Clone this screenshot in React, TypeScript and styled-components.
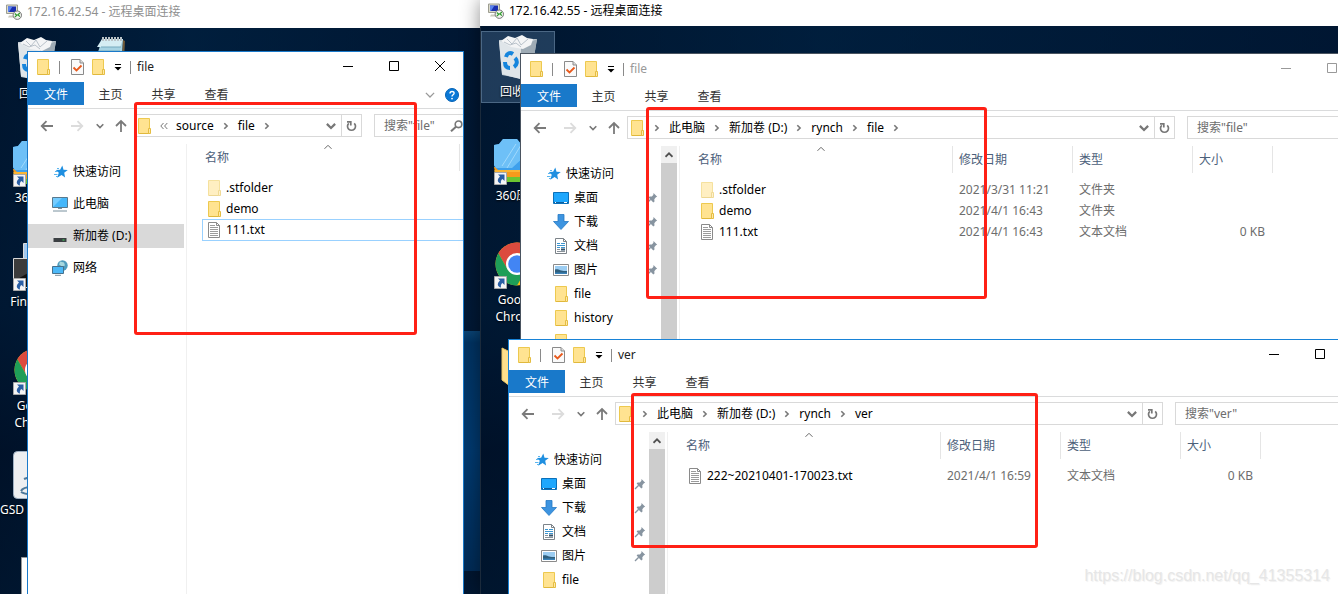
import React from "react";
import styled, { createGlobalStyle } from "styled-components";

const GlobalStyle = createGlobalStyle`
  * { box-sizing: border-box; }
  body {
    margin: 0;
    overflow: hidden;
    font-family: "Noto Sans", "Noto Sans CJK SC", sans-serif;
    font-size: 12px;
    line-height: 16px;
    color: #000;
  }
  button, input { font: inherit; color: inherit; margin: 0; }
  button { border: 0; padding: 0; background: none; }
  svg { display: block; flex: none; }
`;

/* ---------- remote sessions ---------- */

const Screen = styled.main`
  display: flex;
  height: 100vh;
  overflow: hidden;
`;

const Session = styled.section<{ $side: "left" | "right" }>`
  position: relative;
  display: flex;
  flex-direction: column;
  min-width: 0;
  flex: ${(p) => (p.$side === "left" ? "0 0 480px" : "1 1 0")};
  box-shadow: ${(p) => (p.$side === "right" ? "0 0 18px rgba(0, 0, 0, 0.45)" : "none")};
`;

const SessionTitle = styled.header<{ $active: boolean }>`
  display: flex;
  align-items: center;
  gap: 5px;
  flex: none;
  height: ${(p) => (p.$active ? 26 : 28)}px;
  padding: ${(p) => (p.$active ? "0 8px 4px" : "0 6px 4px")};
  background: #fff;
  color: ${(p) => (p.$active ? "#000" : "#8f8f8f")};
`;

const Desktop = styled.div<{ $glow: boolean }>`
  position: relative;
  flex: 1;
  overflow: hidden;
  background: ${(p) =>
    p.$glow
      ? "linear-gradient(#0a4475, #003363 12px, #003a70 50%, #002c58) right 303px / 17px 240px no-repeat,"
      : ""}
    linear-gradient(90deg, rgba(0, 18, 42, 0.6), rgba(0, 34, 68, 0.5) 40%, rgba(0, 20, 48, 0.6)),
    linear-gradient(#001a35, #00203f 50%, #001026 75%, #001a33);
  border-left: ${(p) => (p.$glow ? "0" : "1px solid #1b2a3b")};
`;

const IconColumns = styled.div`
  display: flex;
  gap: 3px;
  padding-top: 5px;
`;

const IconColumn = styled.div`
  display: flex;
  flex-direction: column;
  width: 74px;
`;

const DesktopItem = styled.button<{ $selected?: boolean; $start?: boolean }>`
  display: flex;
  flex-direction: column;
  align-items: ${(p) => (p.$start ? "flex-start" : "center")};
  gap: 2px;
  height: 72px;
  margin-bottom: 32px;
  padding-top: ${(p) => (p.$selected ? 1 : 2)}px;
  color: #fff;
  line-height: 17px;
  text-shadow: 0 1px 2px #000;
  border: ${(p) => (p.$selected ? "1px solid #4b6784" : "0")};
  background: ${(p) => (p.$selected ? "rgba(90, 130, 170, 0.35)" : "none")};

  svg { align-self: center; }
`;

/* ---------- explorer window ---------- */

const Frame = styled.article<{ $left: number; $top: number; $right: number; $border: string }>`
  position: absolute;
  left: ${(p) => p.$left}px;
  top: ${(p) => p.$top}px;
  right: ${(p) => p.$right}px;
  bottom: -40px;
  display: flex;
  flex-direction: column;
  overflow: hidden;
  background: #fff;
  border: 1px solid ${(p) => p.$border};
`;

const TitleBar = styled.header`
  display: flex;
  align-items: center;
  flex: none;
  height: 30px;
  padding-left: 9px;
`;

const Divider = styled.span<{ $wide?: boolean }>`
  width: 1px;
  height: 13px;
  margin-right: ${(p) => (p.$wide ? 3 : 0)}px;
  background: #8a8a8a;
`;

const QuickTools = styled.div`
  display: flex;
  align-items: center;
  gap: 8px;
  margin-right: 6px;
`;

const WindowName = styled.h2<{ $dim: boolean }>`
  flex: 1;
  margin: 0;
  font-size: 12px;
  font-weight: 400;
  color: ${(p) => (p.$dim ? "#999" : "#222")};
`;

const CaptionButton = styled.button<{ $dim: boolean }>`
  display: grid;
  place-items: center;
  width: 46px;
  height: 28px;
  margin-bottom: 2px;
  color: ${(p) => (p.$dim ? "#999" : "#000")};
`;

const TabRow = styled.div`
  display: flex;
  flex: none;
  height: 27px;
  border-bottom: 1px solid #dadbdc;
`;

const Tab = styled.button<{ $file?: boolean }>`
  width: ${(p) => (p.$file ? 56 : 53)}px;
  height: 23px;
  padding-top: 3px;
  color: ${(p) => (p.$file ? "#fff" : "#333")};
  background: ${(p) => (p.$file ? "#1979ca" : "none")};
`;

const TabTools = styled.div`
  display: flex;
  align-items: center;
  gap: 10px;
  margin-left: auto;
  padding-right: 4px;
`;

const NavRow = styled.div`
  display: flex;
  flex: none;
  height: 23px;
  margin: 5px 0 7px;
  padding-left: 4px;
`;

const NavButton = styled.button<{ $width: number }>`
  display: grid;
  place-items: center;
  flex: none;
  width: ${(p) => p.$width}px;
`;

const Address = styled.div`
  display: flex;
  align-items: center;
  flex: 1;
  min-width: 0;
  padding-left: 3px;
  border: 1px solid #d9d9d9;
`;

const Crumbs = styled.nav`
  display: flex;
  align-items: center;
  flex: 1;
`;

const Slot = styled.span`
  display: grid;
  place-items: center;
  width: 24px;
`;

const AddressButton = styled.button<{ $line?: boolean }>`
  display: grid;
  place-items: center;
  width: 20px;
  height: 21px;
  border-left: ${(p) => (p.$line ? "1px solid #d9d9d9" : "0")};
`;

const SearchBox = styled.label<{ $width: number; $clipped: boolean }>`
  display: flex;
  align-items: center;
  flex: none;
  width: ${(p) => p.$width}px;
  margin-left: 12px;
  padding-left: 9px;
  border: 1px solid #d9d9d9;
  border-right-width: ${(p) => (p.$clipped ? 0 : 1)}px;

  input {
    flex: 1;
    min-width: 0;
    width: 0;
    padding: 0;
    border: 0;
    outline: 0;
    background: none;
  }
  input::placeholder { color: #6d6d6d; opacity: 1; }
`;

const Body = styled.div`
  display: flex;
  flex: 1;
  min-height: 0;
`;

const Side = styled.aside`
  display: flex;
  flex: none;
  width: 159px;
  border-right: 1px solid #f0f0f0;
`;

const Places = styled.div<{ $roomy: boolean }>`
  display: flex;
  flex-direction: column;
  flex: 1;
  gap: ${(p) => (p.$roomy ? 8 : 0)}px;
  padding-top: 16px;
  padding-right: ${(p) => (p.$roomy ? 2 : 0)}px;
`;

const Place = styled.button<{ $nested?: boolean; $current?: boolean }>`
  display: flex;
  align-items: center;
  gap: 5px;
  flex: none;
  height: 24px;
  padding: 0 3px 0 ${(p) => (p.$nested ? 32 : 24)}px;
  background: ${(p) => (p.$current ? "#d9d9d9" : "none")};
  white-space: nowrap;

  span { flex: 1; text-align: left; }
`;

const ScrollTrack = styled.div`
  display: flex;
  flex-direction: column;
  width: 16px;
  margin-right: 2px;
  background: #cdcdcd;
`;

const ScrollArrow = styled.button`
  display: grid;
  place-items: center;
  height: 17px;
  background: #f0f0f0;
`;

const Listing = styled.div`
  flex: 1;
  min-width: 0;
  padding-left: 15px;
`;

const Table = styled.table`
  width: 100%;
  table-layout: fixed;
  border-collapse: separate;
  border-spacing: 0;
`;

const Head = styled.th<{ $width?: number; $first?: boolean }>`
  width: ${(p) => (p.$width ? `${p.$width}px` : "auto")};
  height: 27px;
  padding: 0 0 0 ${(p) => (p.$first ? 3 : 6)}px;
  border-right: ${(p) => (p.$width ? "1px solid #e5e5e5" : "0")};
  font-weight: 400;
  text-align: left;
  vertical-align: top;
  color: #4c607a;
`;

const SortMark = styled.span`
  display: grid;
  place-items: center;
  height: 6px;
  padding-right: 8px;
`;

const Spacer = styled.tr`
  height: 6px;
`;

const Cell = styled.td<{ $right?: boolean }>`
  height: 21px;
  padding: 0 ${(p) => (p.$right ? 8 : 0)}px 0 6px;
  color: #6d6d6d;
  text-align: ${(p) => (p.$right ? "right" : "left")};
  white-space: nowrap;
`;

const NameCell = styled.td<{ $focus: boolean }>`
  height: ${(p) => (p.$focus ? 22 : 21)}px;
  padding: 0 0 0 ${(p) => (p.$focus ? 3 : 4)}px;
  border: ${(p) => (p.$focus ? "1px solid #99d1ff" : "0")};
  border-right: 0;

  div { display: flex; align-items: center; gap: 4px; }
`;

const Annotation = styled.div<{ $left: number; $top: number; $width: number; $height: number }>`
  position: absolute;
  left: ${(p) => p.$left}px;
  top: ${(p) => p.$top}px;
  width: ${(p) => p.$width}px;
  height: ${(p) => p.$height}px;
  border: 3px solid #ff2015;
  border-radius: 3px;
  pointer-events: none;
`;

const Watermark = styled.a`
  position: absolute;
  right: 8px;
  bottom: 8px;
  font-family: "Liberation Sans", sans-serif;
  font-size: 16px;
  line-height: 20px;
  color: #e6e6e6;
  text-shadow: 1px 1px 1px #f0f0f0;
  text-decoration: none;
`;

/* ---------- glyphs ---------- */

const Folder = ({ pale = false, size = 14 }: { pale?: boolean; size?: number }) => (
  <svg width={size} height="16" viewBox={size === 16 ? "-2 0 16 16" : "0 0 14 16"} opacity={pale ? 0.55 : 1}>
    <path d="M.5.5h11v15H.5z" fill="#ffe391" stroke="#edc94f" />
    <path d="M1 15.5h11" stroke="#e0b83c" />
    <path d="M10.500 10.500h2v5h-2z" fill="#ffe9a6" stroke="#e5bd42" />
  </svg>
);

const CheckDoc = () => (
  <svg width="13" height="16" viewBox="0 0 13 16">
    <path d="M.5.5h8.500l3.500 3.500v11.500h-12z" fill="#fafafa" stroke="#8a8a8a" />
    <path d="M9 .5v3.500h3.500" fill="#ddd" stroke="#8a8a8a" />
    <path d="M2.500 8.500l3 3 5-5" fill="none" stroke="#e8591c" strokeWidth="1.800" />
  </svg>
);

const TextFile = () => (
  <svg width="16" height="16" viewBox="0 0 16 16">
    <path d="M2.500.5h8l3 3v12h-11z" fill="#fff" stroke="#8a8a8a" />
    <path d="M10.500.5v3h3" fill="none" stroke="#8a8a8a" />
    <path d="M4 3.500h5M4 5.500h8M4 7.500h8M4 9.500h8M4 11.500h8M4 13.500h8" stroke="#9b9b9b" />
  </svg>
);

const ToolArrow = () => (
  <svg width="8" height="7" viewBox="0 0 8 7">
    <path d="M1 .5h6" stroke="#000" />
    <path d="M.5 3h7L4 6.500z" fill="#000" />
  </svg>
);

const Arrow = ({ dir, tone = "#7a7a7a" }: { dir: "left" | "right" | "up"; tone?: string }) => (
  <svg width="14" height="14" viewBox="0 0 14 14" fill="none" stroke={tone} strokeWidth="1.800">
    {dir === "left" && <path d="M13 7H2M6.500 2.200L1.700 7l4.800 4.800" />}
    {dir === "right" && <path d="M1 7h11M7.500 2.200L12.300 7l-4.800 4.800" />}
    {dir === "up" && <path d="M7 13V2M2 7l5-5 5 5" />}
  </svg>
);

const Chevron = ({
  dir,
  size = 8,
  tone = "#777",
  weight = 1.6,
}: {
  dir: "down" | "up" | "right" | "back";
  size?: number;
  tone?: string;
  weight?: number;
}) => (
  <svg width={size} height={dir === "up" ? 6 : size} viewBox={dir === "up" ? "0 1 8 6" : "0 0 8 8"} fill="none" stroke={tone} strokeWidth={weight}>
    {dir === "down" && <path d="M.7 2.300L4 5.600l3.300-3.300" />}
    {dir === "up" && <path d="M.5 5.800L4 2.300l3.500 3.500" />}
    {dir === "right" && <path d="M2.300 1.200L5.100 4 2.300 6.800" />}
    {dir === "back" && <path d="M3.500 1L.8 4l2.700 3M7.300 1L4.600 4l2.700 3" />}
  </svg>
);

const Refresh = () => (
  <svg width="11" height="12" viewBox="0 0 11 12" fill="none" stroke="#777" strokeWidth="1.700">
    <path d="M8.200 3.300a4 4 0 1 1-5.400 0" />
    <path d="M1 1.800h3.800v3.700" />
  </svg>
);

const Magnifier = () => (
  <svg width="13" height="12" viewBox="0 0 13 12" fill="none" stroke="#777">
    <circle cx="8.500" cy="4.300" r="3.300" strokeWidth="1.600" />
    <path d="M6 6.800L1 11.300" strokeWidth="2" />
  </svg>
);

const Help = () => (
  <svg width="14" height="14" viewBox="0 0 14 14">
    <circle cx="7" cy="7" r="6.500" fill="#0a78d6" stroke="#0563b5" />
    <path d="M5 5.400c0-2.600 4.200-2.600 4.100-.1C9 6.800 7 6.800 7 8.500" fill="none" stroke="#fff" strokeWidth="1.400" />
    <circle cx="7" cy="10.600" r=".9" fill="#fff" />
  </svg>
);

const Pin = () => (
  <svg width="12" height="12" viewBox="0 0 12 12">
    <path d="M7.500 1l3.700 3.700-1.300.6-1.600 2 .2 2.200-1.200 1L2.600 5.600l1-1.200 2.300.2 1.500-1.800z" fill="#8794a0" />
    <path d="M4.700 7.300L1 11" stroke="#8794a0" strokeWidth="1.300" />
  </svg>
);

const Remote = () => (
  <svg width="16" height="16" viewBox="0 0 16 16">
    <path d="M.5 1h11v8.500H.5z" fill="#dcdccd" stroke="#9d9d90" />
    <path d="M2 2.500h8v5.500H2z" fill="#1a2fb0" />
    <path d="M2 2.500h4.500L3 8H2z" fill="#5b83ee" />
    <path d="M3 11.500h6v2H2z" fill="#c9c9bb" />
    <circle cx="11.300" cy="11.200" r="4.200" fill="#f2f2ee" stroke="#777" />
    <path d="M8.800 9.500l2 1.700-2 1.900M13.900 9l-2 1.700 2 1.900" fill="none" stroke="#2d9c2d" strokeWidth="1.200" />
  </svg>
);

type PlaceKind = "star" | "pc" | "drive" | "net" | "desktop" | "down" | "doc" | "pic" | "folder";

const PlaceIcon = ({ kind }: { kind: PlaceKind }) => {
  if (kind === "folder") return <Folder size={16} />;
  return (
    <svg width="16" height="16" viewBox="0 0 16 16">
      {kind === "star" && (
        <>
          <path d="M10.300 1.500l1.200 4.200 4.300.2-3.600 2.800.9 4.800-3.500-2.600-4.400 2.800 1.600-4.900-3-2.700 4.300-.3z" fill="#1f8fe0" />
          <path d="M5 4.500h2M3 7.500h3M2 10.500h3.500M4 12.500h2" stroke="#5cb5ee" />
        </>
      )}
      {kind === "pc" && (
        <>
          <path d="M.5 1.500h15v10H.5z" fill="#45b7fa" stroke="#58798e" />
          <path d="M1 11V2h9z" fill="#74ccff" />
          <path d="M6 12.500h4M1 15h14" stroke="#78909e" />
        </>
      )}
      {kind === "drive" && (
        <>
          <path d="M3.500 6.500h9l2 3.500h-13z" fill="#dedede" />
          <path d="M1.500 10h13v4h-13z" fill="#3b3f42" />
          <path d="M10.500 12h2" stroke="#41e05f" />
        </>
      )}
      {kind === "net" && (
        <>
          <circle cx="10.500" cy="5.500" r="5.200" fill="#4f9cbd" />
          <path d="M8 1.500l4 1 1 3-3 1-3-2z" fill="#a7d8df" />
          <path d="M.5 6.500h11v7H.5z" fill="#4cb8f7" stroke="#47718c" />
          <path d="M3 15.300h6" stroke="#78909e" />
        </>
      )}
      {kind === "desktop" && (
        <>
          <path d="M.5 2.500h15v11H.5z" fill="#1ea7fd" stroke="#0b70b9" />
          <path d="M1 12.500h14" stroke="#0c5f9f" />
          <path d="M2 12.500h1M11 12.500h3" stroke="#fff" />
        </>
      )}
      {kind === "down" && <path d="M5 .5h6v7h4.500L8 15.500.5 7.500H5z" fill="#3d94e0" stroke="#2479c4" strokeWidth=".8" />}
      {kind === "doc" && (
        <>
          <path d="M2.500.5h8l3 3v12h-11z" fill="#fff" stroke="#7c8389" />
          <path d="M10.500.5v3h3" fill="none" stroke="#7c8389" />
          <path d="M4 5.500h3M8 5.500h4M4 7.500h8M4 9.500h3M8 9.500h4" stroke="#3b95d0" />
          <path d="M4 11.500h3M4 13.500h8" stroke="#8a9299" />
          <path d="M8 11.500h4" stroke="#33526b" strokeWidth="2" />
        </>
      )}
      {kind === "pic" && (
        <>
          <path d="M.5 2.500h15v11H.5z" fill="#fff" stroke="#8b8b8b" />
          <path d="M2 4h12v8H2z" fill="#9ccdf2" />
          <path d="M2 7.500c4-1 5 2 12 1.500v3H2z" fill="#2f5f7d" />
          <path d="M2 10.500h12V12H2z" fill="#3a82b8" />
        </>
      )}
    </svg>
  );
};

const Shortcut = () => (
  <g>
    <path d="M.5 35.500h12v12H.5z" fill="#f5f5f5" stroke="#a8a8a8" />
    <path d="M4 37.500h6.500V44l-2-2c-1.500 1-2 2.500-1.500 4.500-3.500-.5-4.500-4-1-7z" fill="#2a5fa5" />
  </g>
);

type DesktopKind = "bin" | "zip" | "shell" | "chrome" | "java" | "page" | "notepad" | "folder";

const DesktopGlyph = ({ kind }: { kind: DesktopKind }) => (
  <svg width="48" height="48" viewBox="0 0 48 48">
    {kind === "bin" && (
      <>
        <path d="M5 7l38-1-6 35-8 5-21-4z" fill="#c3cdd4" />
        <path d="M5 8l22 6-1 32-18-5z" fill="#dfe5e9" />
        <path d="M27 14l16-8-6 35-11 5z" fill="#9eabb5" />
        <path d="M7 8l7-5 7 2 7-3 5 3 6 1-2 6-8 4-12-2z" fill="#f4f5f6" />
        <path d="M13 6l5 5 5-6 4 7 7-6M10 9l6 3 6-2 5 4" fill="none" stroke="#b9c2ca" />
        <path d="M12 24c1-4 4-5 7-3M21 25c3 3 2 7-1 9M16 35c-4 0-5-3-5-6" fill="none" stroke="#1585dd" strokeWidth="4" />
      </>
    )}
    {kind === "zip" && (
      <>
        <path d="M4 34h36v11H4z" fill="#6cc531" />
        <path d="M0 30h42l-2 10H2z" fill="#f79a1c" />
        <path d="M0 34h42" stroke="#ffd24a" />
        <path d="M0 8l5-1 4-5h14l4 5h17v22l-4 4H4l-4-4z" fill="#3ea0ec" />
        <path d="M0 8l5-1 4-5h14l4 5h17L18 31H2l-2-3z" fill="#7fcbfb" opacity=".75" />
        <path d="M22 7L8 29M27 8L13 31" stroke="#b7e4ff" opacity=".7" />
        <Shortcut />
      </>
    )}
    {kind === "shell" && (
      <>
        <path d="M10.500.5h34v30h-34z" fill="#a4c9ee" stroke="#ddd" />
        <path d="M.5 15.500h40v29H.5z" fill="#111" stroke="#d8d8d8" />
        <path d="M1 16h39L1 38z" fill="#3c3c3c" />
        <Shortcut />
      </>
    )}
    {kind === "chrome" && (
      <>
        <circle cx="23" cy="23" r="21.500" fill="#fbc116" />
        <path d="M4.400 12.300A21.500 21.500 0 0 1 41.600 12.300H23L13.700 28.400z" fill="#dc4b3e" />
        <path d="M4.400 12.300A21.500 21.500 0 0 0 23 44.500l9.300-16.100-9.300 5.300-9.300-5.300z" fill="#1e9e58" />
        <circle cx="23" cy="23" r="11" fill="#fff" />
        <circle cx="23" cy="23" r="8.800" fill="#4285f4" />
        <Shortcut />
      </>
    )}
    {kind === "java" && (
      <>
        <rect x=".5" y=".5" width="47" height="47" rx="4" fill="#eeeff1" stroke="#9fb0c2" />
        <path d="M22 20c-6 4 3 6-2 10M11 28c4-2 12-1 16 0M8 40c3-6 18-4 24-2M8 41c6 4 18 2 22 0" fill="none" stroke="#4f7898" strokeWidth="2" />
      </>
    )}
    {kind === "page" && <path d="M8.500 2.500h31v45h-31z" fill="#fff" stroke="#999" />}
    {kind === "notepad" && (
      <>
        <path d="M12 4h21l-2 40H0z" fill="#a7d3e2" />
        <path d="M12 4h21l-3 8H7z" fill="#d5edf3" />
        <path d="M11 12h20M9 16h21" stroke="#76aabd" />
        <path d="M33 5l2 1-2 38h-2z" fill="#6f5a38" />
        <path d="M12 4h21" stroke="#bac3c7" strokeWidth="4" strokeDasharray="2 1" />
      </>
    )}
    {kind === "folder" && <path d="M8 3l8 4v34l-8-6z M16 7h24v34H16z" fill="#ffe08c" stroke="#edc867" />}
  </svg>
);

/* ---------- explorer composition ---------- */

interface PlaceEntry {
  kind: PlaceKind;
  name: string;
  nested?: boolean;
  pinned?: boolean;
  current?: boolean;
}

interface FileEntry {
  name: string;
  icon: "folder" | "pale" | "text";
  date?: string;
  type?: string;
  size?: string;
  focus?: boolean;
}

interface ExplorerProps {
  title: string;
  frame: { $left: number; $top: number; $right: number; $border: string };
  crumbs: string[];
  leaf?: boolean;
  collapsed?: boolean;
  dim?: boolean;
  places: PlaceEntry[];
  files: FileEntry[];
  searchWidth: number;
}

const Explorer = ({
  title,
  frame,
  crumbs,
  leaf = false,
  collapsed = false,
  dim = false,
  places,
  files,
  searchWidth,
}: ExplorerProps) => (
  <Frame {...frame}>
    <TitleBar>
      <QuickTools>
        <Folder />
        <Divider $wide />
        <CheckDoc />
        <Folder />
        <ToolArrow />
        <Divider />
      </QuickTools>
      <WindowName $dim={dim}>{title}</WindowName>
      <CaptionButton $dim={dim} aria-label="最小化">
        <svg width="10" height="10" viewBox="0 0 10 10"><path d="M0 5.500h10" stroke="currentColor" /></svg>
      </CaptionButton>
      <CaptionButton $dim={dim} aria-label="最大化">
        <svg width="10" height="10" viewBox="0 0 10 10"><path d="M.5.5h9v9h-9z" fill="none" stroke="currentColor" /></svg>
      </CaptionButton>
      <CaptionButton $dim={dim} aria-label="关闭">
        <svg width="10" height="10" viewBox="0 0 10 10"><path d="M0 0l10 10M10 0L0 10" stroke="currentColor" /></svg>
      </CaptionButton>
    </TitleBar>

    <TabRow>
      <Tab $file>文件</Tab>
      <Tab>主页</Tab>
      <Tab>共享</Tab>
      <Tab>查看</Tab>
      <TabTools>
        <Chevron dir="down" size={10} tone="#999" weight={1} />
        <Help />
      </TabTools>
    </TabRow>

    <NavRow>
      <NavButton $width={30} aria-label="后退"><Arrow dir="left" /></NavButton>
      <NavButton $width={30} aria-label="前进"><Arrow dir="right" tone="#dcdcdc" /></NavButton>
      <NavButton $width={16} aria-label="最近的位置"><Chevron dir="down" size={8} /></NavButton>
      <NavButton $width={26} aria-label="上移"><Arrow dir="up" /></NavButton>
      <Address>
        <Folder />
        <Crumbs>
          <Slot><Chevron dir={collapsed ? "back" : "right"} weight={collapsed ? 1 : 1.6} /></Slot>
          {crumbs.map((crumb, i) => (
            <React.Fragment key={crumb}>
              <button>{crumb}</button>
              {!(leaf && i === crumbs.length - 1) && <Slot><Chevron dir="right" /></Slot>}
            </React.Fragment>
          ))}
        </Crumbs>
        <AddressButton aria-label="展开"><Chevron dir="down" size={10} weight={1.8} /></AddressButton>
        <AddressButton $line aria-label="刷新"><Refresh /></AddressButton>
      </Address>
      <SearchBox $width={searchWidth} $clipped={collapsed}>
        <input type="search" placeholder={`搜索"${title}"`} aria-label={`搜索"${title}"`} />
        <Magnifier />
      </SearchBox>
    </NavRow>

    <Body>
      <Side>
        <Places $roomy={collapsed}>
          {places.map((place) => (
            <Place key={place.name} $nested={place.nested} $current={place.current}>
              <PlaceIcon kind={place.kind} />
              <span>{place.name}</span>
              {place.pinned && <Pin />}
            </Place>
          ))}
        </Places>
        {!collapsed && (
          <ScrollTrack>
            <ScrollArrow aria-label="向上滚动"><Chevron dir="up" tone="#505050" weight={1.8} /></ScrollArrow>
          </ScrollTrack>
        )}
      </Side>
      <Listing>
        <Table>
          <thead>
            <tr>
              <Head $width={258} $first>
                <SortMark><Chevron dir="up" tone="#666" weight={1} /></SortMark>
                名称
              </Head>
              {!collapsed && (
                <>
                  <Head $width={120}><SortMark />修改日期</Head>
                  <Head $width={120}><SortMark />类型</Head>
                  <Head $width={80}><SortMark />大小</Head>
                </>
              )}
              <Head as="td" />
            </tr>
          </thead>
          <tbody>
            <Spacer />
            {files.map((file) => (
              <tr key={file.name}>
                <NameCell $focus={Boolean(file.focus)} colSpan={collapsed ? 2 : 1}>
                  <div>
                    {file.icon === "text" ? <TextFile /> : <Folder size={16} pale={file.icon === "pale"} />}
                    {file.name}
                  </div>
                </NameCell>
                {!collapsed && (
                  <>
                    <Cell>{file.date}</Cell>
                    <Cell>{file.type}</Cell>
                    <Cell $right>{file.size}</Cell>
                  </>
                )}
              </tr>
            ))}
          </tbody>
        </Table>
      </Listing>
    </Body>
  </Frame>
);

/* ---------- content ---------- */

const sourcePlaces: PlaceEntry[] = [
  { kind: "star", name: "快速访问" },
  { kind: "pc", name: "此电脑" },
  { kind: "drive", name: "新加卷 (D:)", current: true },
  { kind: "net", name: "网络" },
];

const quickPlaces: PlaceEntry[] = [
  { kind: "star", name: "快速访问" },
  { kind: "desktop", name: "桌面", nested: true, pinned: true },
  { kind: "down", name: "下载", nested: true, pinned: true },
  { kind: "doc", name: "文档", nested: true, pinned: true },
  { kind: "pic", name: "图片", nested: true, pinned: true },
  { kind: "folder", name: "file", nested: true },
  { kind: "folder", name: "history", nested: true },
  { kind: "folder", name: "pos", nested: true },
];

const sourceFiles: FileEntry[] = [
  { name: ".stfolder", icon: "pale" },
  { name: "demo", icon: "folder" },
  { name: "111.txt", icon: "text", focus: true },
];

const syncedFiles: FileEntry[] = [
  { name: ".stfolder", icon: "pale", date: "2021/3/31 11:21", type: "文件夹" },
  { name: "demo", icon: "folder", date: "2021/4/1 16:43", type: "文件夹" },
  { name: "111.txt", icon: "text", date: "2021/4/1 16:43", type: "文本文档", size: "0 KB" },
];

const versionFiles: FileEntry[] = [
  { name: "222~20210401-170023.txt", icon: "text", date: "2021/4/1 16:59", type: "文本文档", size: "0 KB" },
];

export default function App() {
  return (
    <Screen>
      <GlobalStyle />
      <Session $side="left">
        <SessionTitle $active={false}><Remote />172.16.42.54 - 远程桌面连接</SessionTitle>
        <Desktop $glow>
          <IconColumns>
            <IconColumn>
              <DesktopItem><DesktopGlyph kind="bin" />回收站</DesktopItem>
              <DesktopItem><DesktopGlyph kind="zip" />360压缩</DesktopItem>
              <DesktopItem><DesktopGlyph kind="shell" />FinalShell</DesktopItem>
              <DesktopItem><DesktopGlyph kind="chrome" />Google<br />Chrome</DesktopItem>
              <DesktopItem $start><DesktopGlyph kind="java" />GSD</DesktopItem>
              <DesktopItem aria-label="文件"><DesktopGlyph kind="page" /></DesktopItem>
            </IconColumn>
            <IconColumn>
              <DesktopItem aria-label="记事本"><DesktopGlyph kind="notepad" /></DesktopItem>
            </IconColumn>
          </IconColumns>
          <Explorer
            title="file"
            frame={{ $left: 27, $top: 23, $right: 16, $border: "#1979ca" }}
            crumbs={["source", "file"]}
            collapsed
            places={sourcePlaces}
            files={sourceFiles}
            searchWidth={89}
          />
          <Annotation $left={134} $top={74} $width={283} $height={233} />
        </Desktop>
      </Session>

      <Session $side="right">
        <SessionTitle $active><Remote />172.16.42.55 - 远程桌面连接</SessionTitle>
        <Desktop $glow={false}>
          <IconColumns>
            <IconColumn>
              <DesktopItem $selected><DesktopGlyph kind="bin" />回收站</DesktopItem>
              <DesktopItem><DesktopGlyph kind="zip" />360压缩</DesktopItem>
              <DesktopItem><DesktopGlyph kind="chrome" />Google<br />Chrome</DesktopItem>
              <DesktopItem aria-label="文件夹"><DesktopGlyph kind="folder" /></DesktopItem>
            </IconColumn>
          </IconColumns>
          <Explorer
            title="file"
            frame={{ $left: 39, $top: 27, $right: -64, $border: "#4a5460" }}
            crumbs={["此电脑", "新加卷 (D:)", "rynch", "file"]}
            dim
            places={quickPlaces}
            files={syncedFiles}
            searchWidth={214}
          />
          <Explorer
            title="ver"
            frame={{ $left: 27, $top: 313, $right: -52, $border: "#1883d7" }}
            crumbs={["此电脑", "新加卷 (D:)", "rynch", "ver"]}
            leaf
            places={quickPlaces.slice(0, 6)}
            files={versionFiles}
            searchWidth={214}
          />
          <Annotation $left={165} $top={81} $width={341} $height={192} />
          <Annotation $left={150} $top={367} $width={407} $height={155} />
          <Watermark href="https://blog.csdn.net/qq_41355314">https://blog.csdn.net/qq_41355314</Watermark>
        </Desktop>
      </Session>
    </Screen>
  );
}
